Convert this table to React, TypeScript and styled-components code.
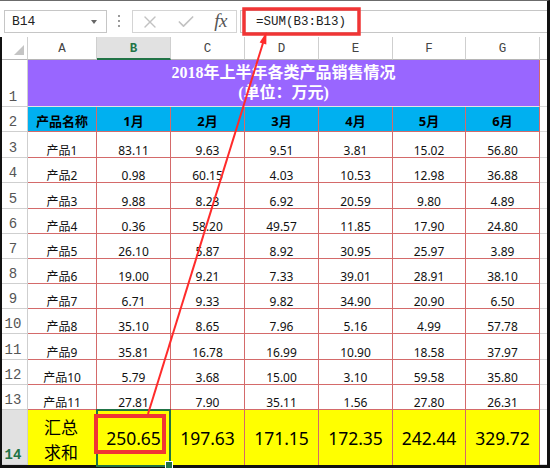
import React from 'react';
import styled, { createGlobalStyle, css } from 'styled-components';
import { X, Check } from 'lucide-react';

const GlobalStyle = createGlobalStyle`
  html, body { margin: 0; padding: 0; background: #fff; }
  body { font-family: "Noto Sans", "Noto Sans CJK SC", sans-serif; }
  * { box-sizing: border-box; }
`;

const PINK = '#D46A6A';
const GRID = '#DADADA';
const HDR_LINE = '#CFCFCF';
const GREEN = '#217346';

const Root = styled.div`
  position: relative;
  width: 554px;
  height: 470px;
  background: #fff;
  overflow: hidden;
`;

const Window = styled.div`
  width: 550px;
  border-top: 1px solid #6b6b6b;
  border-right: 3px solid #111;
`;

const FormulaBar = styled.div`
  display: flex;
  align-items: flex-start;
  height: 36px;
  padding: 9px 0 0 4px;
`;

const NameBox = styled.div`
  width: 103px;
  height: 23px;
  border: 1px solid #c6c6c6;
  display: flex;
  align-items: center;
  padding-left: 7px;
  font: 13px "Liberation Mono", monospace;
  color: #222;
`;

const Caret = styled.span`
  margin-left: auto;
  margin-right: 9px;
  width: 0;
  height: 0;
  border-left: 3.5px solid transparent;
  border-right: 3.5px solid transparent;
  border-top: 4px solid #666;
`;

const Dots = styled.div`
  margin: 5px 0 0 11px;
  display: flex;
  flex-direction: column;
  gap: 3px;
`;

const Dot = styled.span`
  width: 2px;
  height: 2px;
  background: #9a9a9a;
`;

const FxGroup = styled.div`
  margin-left: 12px;
  width: 105px;
  height: 23px;
  border: 1px solid #d4d4d4;
  display: grid;
  grid-template-columns: 34px 38px 1fr;
  align-items: center;
  justify-items: center;
  color: #c2c2c2;
`;

const FxLabel = styled.span`
  font: italic 19px "Liberation Serif", serif;
  color: #555;
  line-height: 1;
  margin-top: -2px;
  letter-spacing: -0.5px;
`;

const FormulaInput = styled.div`
  margin-left: 3px;
  flex: 1;
  height: 23px;
  border: 1px solid #c6c6c6;
  border-right: none;
  display: flex;
  align-items: center;
  padding-left: 15px;
  font: 12.5px "Liberation Mono", monospace;
  color: #222;
`;

const Sheet = styled.div<{ $rows: string }>`
  display: grid;
  grid-template-columns: 26px 69px 74px 74px 74px 74px 73px 74px 7px;
  grid-template-rows: ${(p) => p.$rows};
  border-left: 2px solid #111;
  border-bottom: 3px solid #111;
`;

const Corner = styled.div`
  position: relative;
  border-right: 1px solid ${HDR_LINE};
  border-bottom: 1px solid #b5b5b5;
  &::after {
    content: '';
    position: absolute;
    right: 3px;
    bottom: 4px;
    width: 0;
    height: 0;
    border-left: 10px solid transparent;
    border-bottom: 10px solid #c4c4c4;
  }
`;

const ColHeader = styled.div<{ $selected?: boolean }>`
  display: flex;
  align-items: center;
  justify-content: center;
  padding-top: 2px;
  border-right: 1px solid ${HDR_LINE};
  border-bottom: 1px solid #b5b5b5;
  font: 12.5px "Liberation Mono", monospace;
  color: #444;
  ${(p) =>
    p.$selected &&
    css`
      background: #e1e1e1;
      color: ${GREEN};
      font-weight: bold;
      border-bottom: 2px solid ${GREEN};
    `}
`;

const RowHeader = styled.div<{ $selected?: boolean }>`
  display: flex;
  align-items: flex-end;
  justify-content: center;
  padding-right: 3px;
  border-right: 1px solid ${HDR_LINE};
  border-bottom: 1px solid ${HDR_LINE};
  font: 14px "Liberation Mono", monospace;
  line-height: 14px;
  padding-bottom: 2px;
  color: #555;
  ${(p) =>
    p.$selected &&
    css`
      background: #e1e1e1;
      color: ${GREEN};
      font-weight: bold;
    `}
`;

const Title = styled.div`
  grid-column: span 7;
  background: #9966ff;
  color: #fff;
  display: flex;
  flex-direction: column;
  justify-content: flex-end;
  align-items: center;
  padding-bottom: 3px;
  font: bold 16px "Liberation Serif", "Noto Sans CJK SC", serif;
  line-height: 20px;
  border-right: 1px solid ${PINK};
  border-bottom: 1px solid #e4e4e4;
`;

const HeadCell = styled.div`
  background: #00b0f0;
  display: flex;
  align-items: center;
  justify-content: center;
  padding-top: 3px;
  font: bold 13px "Noto Sans", "Noto Sans CJK SC", sans-serif;
  color: #000;
  border-right: 1px solid ${PINK};
  border-bottom: 1px solid ${PINK};
`;

const DataCell = styled.div`
  display: flex;
  align-items: flex-end;
  justify-content: center;
  font: 12px "Noto Sans", "Noto Sans CJK SC", sans-serif;
  line-height: 12px;
  color: #111;
  border-right: 1px solid ${PINK};
  border-bottom: 1px solid ${PINK};
`;

const TotalCell = styled.div<{ $selected?: boolean; $label?: boolean }>`
  position: relative;
  background: #ffff00;
  display: flex;
  flex-direction: column;
  align-items: center;
  justify-content: center;
  text-align: center;
  color: #000;
  font: 17.5px "Noto Sans", "Noto Sans CJK SC", sans-serif;
  border-right: 1px solid ${PINK};
  ${(p) =>
    p.$label &&
    css`
      font: 17px "Noto Sans CJK SC", sans-serif;
      padding: 2px 2px 0 0;
    `}
  ${(p) =>
    p.$selected &&
    css`
      &::after {
        content: '';
        position: absolute;
        top: -1px;
        left: -1px;
        right: -1px;
        bottom: -2px;
        border: 2px solid ${GREEN};
      }
      &::before {
        content: '';
        position: absolute;
        right: -3px;
        bottom: -4px;
        width: 6px;
        height: 6px;
        background: ${GREEN};
        border: 1px solid #fff;
        z-index: 1;
      }
    `}
`;

const LabelLine = styled.span`
  display: block;
  line-height: 25px;
`;

const Filler = styled.div<{ $header?: boolean }>`
  border-bottom: 1px solid ${(p) => (p.$header ? '#b5b5b5' : GRID)};
`;

const Overlay = styled.svg`
  position: absolute;
  left: 0;
  top: 0;
  pointer-events: none;
`;

const COLS = ['A', 'B', 'C', 'D', 'E', 'F', 'G'];
const MONTHS = ['产品名称', '1月', '2月', '3月', '4月', '5月', '6月'];
const DATA: string[][] = [
  ['产品1', '83.11', '9.63', '9.51', '3.81', '15.02', '56.80'],
  ['产品2', '0.98', '60.15', '4.03', '10.53', '12.98', '36.88'],
  ['产品3', '9.88', '8.23', '6.92', '20.59', '9.80', '4.89'],
  ['产品4', '0.36', '58.20', '49.57', '11.85', '17.90', '24.80'],
  ['产品5', '26.10', '5.87', '8.92', '30.95', '25.97', '3.89'],
  ['产品6', '19.00', '9.21', '7.33', '39.01', '28.91', '38.10'],
  ['产品7', '6.71', '9.33', '9.82', '34.90', '20.90', '6.50'],
  ['产品8', '35.10', '8.65', '7.96', '5.16', '4.99', '57.78'],
  ['产品9', '35.81', '16.78', '16.99', '10.90', '18.58', '37.97'],
  ['产品10', '5.79', '3.68', '15.00', '3.10', '59.58', '35.80'],
  ['产品11', '27.81', '7.90', '35.11', '1.56', '27.80', '26.31'],
];
const TOTALS = ['250.65', '197.63', '171.15', '172.35', '242.44', '329.72'];
const DATA_HEIGHTS = [26, 25, 26, 25, 25, 25, 25, 25, 26, 25, 25];
const ROWS = [23, 47, 25, ...DATA_HEIGHTS, 55].map((h) => `${h}px`).join(' ');

export default function App() {
  return (
    <Root>
      <GlobalStyle />
      <Window>
        <FormulaBar>
          <NameBox>
            B14
            <Caret />
          </NameBox>
          <Dots>
            <Dot />
            <Dot />
            <Dot />
          </Dots>
          <FxGroup>
            <X size={20} strokeWidth={1.6} />
            <Check size={20} strokeWidth={2} />
            <FxLabel>fx</FxLabel>
          </FxGroup>
          <FormulaInput>=SUM(B3:B13)</FormulaInput>
        </FormulaBar>
        <Sheet $rows={ROWS}>
          <Corner />
          {COLS.map((c) => (
            <ColHeader key={c} $selected={c === 'B'}>
              {c}
            </ColHeader>
          ))}
          <Filler $header />

          <RowHeader>1</RowHeader>
          <Title>
            <span>2018年上半年各类产品销售情况</span>
            <span>(单位：万元)</span>
          </Title>
          <Filler />

          <RowHeader>2</RowHeader>
          {MONTHS.map((m) => (
            <HeadCell key={m}>{m}</HeadCell>
          ))}
          <Filler />

          {DATA.map((row, i) => (
            <React.Fragment key={i}>
              <RowHeader>{i + 3}</RowHeader>
              {row.map((v, j) => (
                <DataCell key={j}>{v}</DataCell>
              ))}
              <Filler />
            </React.Fragment>
          ))}

          <RowHeader $selected>14</RowHeader>
          <TotalCell $label>
            <LabelLine>汇总</LabelLine>
            <LabelLine>求和</LabelLine>
          </TotalCell>
          {TOTALS.map((t, j) => (
            <TotalCell key={t} $selected={j === 0}>
              {t}
            </TotalCell>
          ))}
          <Filler />
        </Sheet>
      </Window>
      <Overlay width={554} height={470} viewBox="0 0 554 470">
        <rect x={244} y={9} width={115} height={25} fill="none" stroke="#F03535" strokeWidth={3.5} />
        <rect x={96} y={416} width={68} height={36} fill="none" stroke="#F03535" strokeWidth={4} />
        <line x1={148} y1={414} x2={263} y2={43} stroke="#FF2B2B" strokeWidth={2} />
        <polygon points="266.5,32 266.3,44.5 259.6,42.4" fill="#FF2B2B" />
      </Overlay>
    </Root>
  );
}
